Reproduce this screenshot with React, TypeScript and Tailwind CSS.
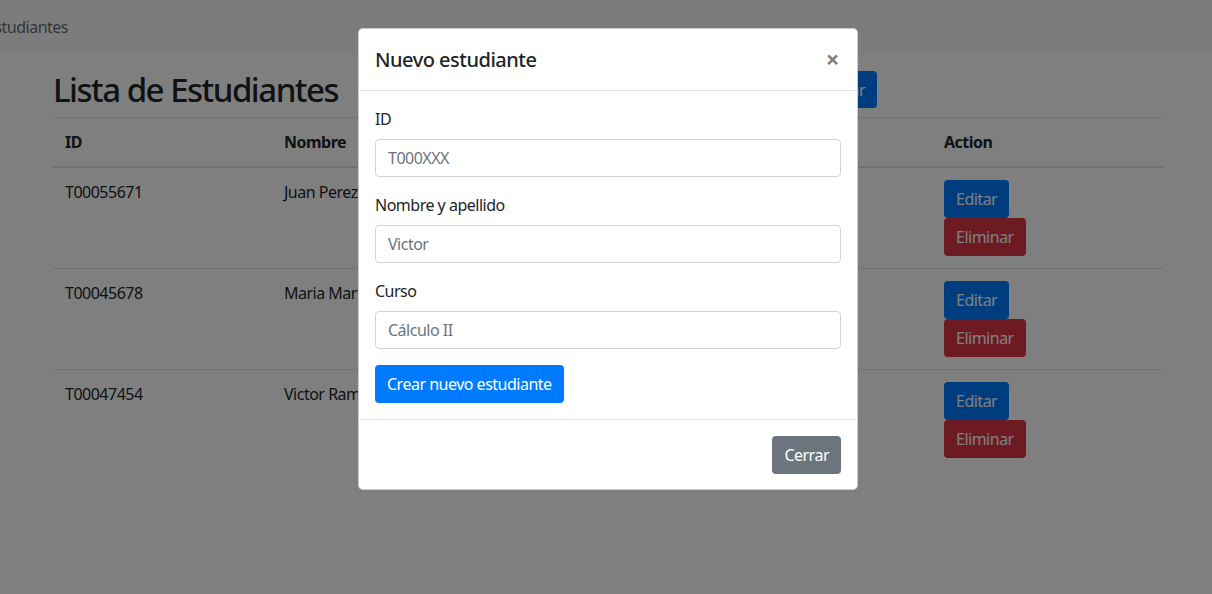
import React from 'react';

const students = [
  { id: 'T00055671', name: 'Juan Perez', course: 'Cálculo I' },
  { id: 'T00045678', name: 'Maria Martinez', course: 'Física II' },
  { id: 'T00047454', name: 'Victor Ramirez', course: 'Cálculo II' },
];

const fields = [
  { label: 'ID', placeholder: 'T000XXX' },
  { label: 'Nombre y apellido', placeholder: 'Victor' },
  { label: 'Curso', placeholder: 'Cálculo II' },
];

export default function App() {
  return (
    <div className="relative min-h-[594px] bg-white text-[16px] leading-6 tracking-[-0.5px] text-[#212529] font-['Noto_Sans',sans-serif] overflow-hidden">
      {/* navbar */}
      <nav className="h-[54px] bg-[#f8f9fa] flex items-center">
        <span className="ml-[-14px] text-black/60">Estudiantes</span>
      </nav>

      {/* page */}
      <div className="ml-[53px] w-[1110px] pt-[17px]">
        <div className="flex items-start justify-between w-[824px] mb-2">
          <h1 className="text-[33px] leading-[38px] font-medium tracking-[-1.5px]">Lista de Estudiantes</h1>
          <button className="h-[37px] px-3 rounded bg-[#007bff] text-white">Agregar</button>
        </div>

        <div className="border-t border-[#dee2e6]">
          <div className="grid grid-cols-[219px_330px_330px_231px] border-b-2 border-[#dee2e6] font-bold">
            <div className="p-3">ID</div>
            <div className="p-3">Nombre</div>
            <div className="p-3">Curso</div>
            <div className="p-3">Action</div>
          </div>
          {students.map((s, i) => (
            <div
              key={s.id}
              className={`grid grid-cols-[219px_330px_330px_231px] ${i > 0 ? 'border-t border-[#dee2e6]' : ''}`}
            >
              <div className="p-3">{s.id}</div>
              <div className="p-3">{s.name}</div>
              <div className="p-3">{s.course}</div>
              <div className="p-3 flex flex-col items-start">
                <button className="h-[38px] px-3 rounded bg-[#007bff] text-white">Editar</button>
                <button className="h-[38px] px-3 rounded bg-[#dc3545] text-white">Eliminar</button>
              </div>
            </div>
          ))}
        </div>
      </div>

      {/* backdrop */}
      <div className="absolute inset-0 bg-black/50" />

      {/* modal */}
      <div className="absolute top-[28px] left-[358px] w-[500px] bg-white border border-black/20 rounded-[5px]">
        <div className="flex items-start justify-between px-4 pt-4 pb-[15px] border-b border-[#dee2e6]">
          <h5 className="text-[20px] leading-[30px] font-medium tracking-[-0.5px]">Nuevo estudiante</h5>
          <button className="text-[24px] leading-[28px] font-bold text-black opacity-50 mr-[2px]">×</button>
        </div>
        <div className="p-4">
          {fields.map((f) => (
            <div key={f.label} className="mb-4">
              <label className="block mb-2">{f.label}</label>
              <input
                placeholder={f.placeholder}
                className="block w-full h-[38px] px-3 border border-[#ced4da] rounded tracking-[-0.5px] placeholder:text-[#6c757d] outline-none"
              />
            </div>
          ))}
          <button className="h-[38px] px-3 rounded bg-[#007bff] text-white">Crear nuevo estudiante</button>
        </div>
        <div className="flex justify-end px-4 pt-4 pb-[15px] border-t border-[#dee2e6]">
          <button className="h-[38px] px-3 rounded bg-[#6c757d] text-white">Cerrar</button>
        </div>
      </div>
    </div>
  );
}
